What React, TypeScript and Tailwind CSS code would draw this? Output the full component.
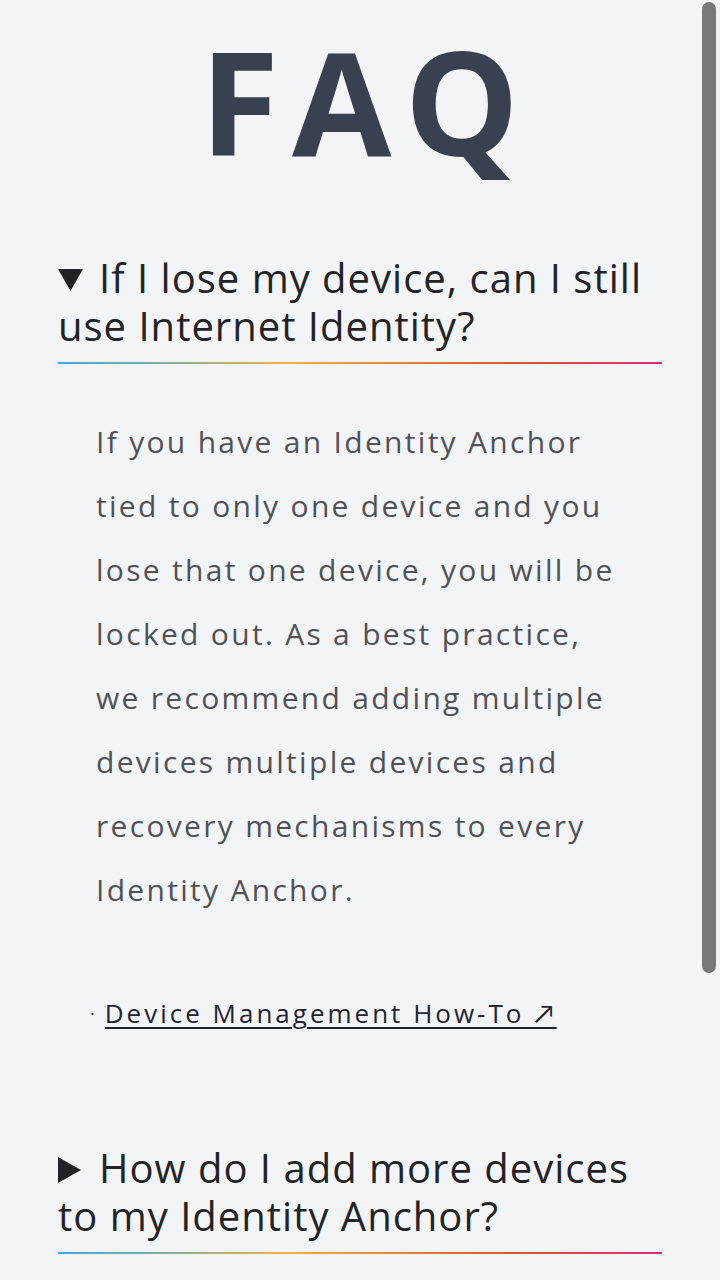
import React from "react";

const grad =
  "bg-[linear-gradient(90deg,#3fa9de_0%,#8fae93_20%,#f2b24a_38%,#e8883a_55%,#dc5a38_72%,#dc3f5c_88%,#dd2e78_100%)]";

function Down() {
  return (
    <svg width="25" height="22" viewBox="0 0 25 22" className="inline-block align-[2px]">
      <polygon points="0,0 25,0 12.5,22" fill="#222326" />
    </svg>
  );
}
function Right() {
  return (
    <svg width="23" height="26" viewBox="0 0 23 26" className="inline-block align-baseline">
      <polygon points="0,0 23,13 0,26" fill="#222326" />
    </svg>
  );
}

const answer = [
  "If you have an Identity Anchor",
  "tied to only one device and you",
  "lose that one device, you will be",
  "locked out. As a best practice,",
  "we recommend adding multiple",
  "devices multiple devices and",
  "recovery mechanisms to every",
  "Identity Anchor.",
];

export default function App() {
  return (
    <div
      className="relative h-[1280px] w-[720px] overflow-hidden bg-[#f3f4f6]"
      style={{ fontFamily: "'Open Sans', Lato, sans-serif" }}
    >
      <div className="px-[58px] pt-[28px]">
        <h1 className="pl-[12px] text-center text-[144px] font-bold leading-none tracking-[13px] text-[#394150]">
          FAQ
        </h1>

        <div className="mt-[82px]">
          <h2 className="text-[40px] font-normal leading-[48px] tracking-[1px] text-[#222326]">
            <span className="mr-[16px]">
              <Down />
            </span>
            If I lose my device, can I still
            <br />
            use Internet Identity?
          </h2>
          <div className={`mt-[12px] h-[2px] w-full ${grad}`} />

          <div className="mt-[46px] pl-[38px] text-[30px] leading-[64px] tracking-[2.3px] text-[#505256]">
            {answer.map((l) => (
              <div key={l}>{l}</div>
            ))}
          </div>

          <div className="mt-[73px] flex items-center pl-[32px] text-[26px] leading-[36px] text-[#1f2430]">
            <span className="mr-[10px] text-[18px]">·</span>
            <a href="#" className="underline decoration-[2px] underline-offset-[4px] tracking-[3px]">
              Device Management How-To ↗
            </a>
          </div>
        </div>

        <div className="mt-[113px]">
          <h2 className="text-[40px] font-normal leading-[48px] tracking-[1px] text-[#222326]">
            <span className="mr-[18px]">
              <Right />
            </span>
            How do I add more devices
            <br />
            to my Identity Anchor?
          </h2>
          <div className={`mt-[12px] h-[2px] w-full ${grad}`} />
        </div>
      </div>

      <div className="absolute right-[4px] top-[2px] h-[971px] w-[14px] rounded-full bg-[#77787b]" />
    </div>
  );
}
